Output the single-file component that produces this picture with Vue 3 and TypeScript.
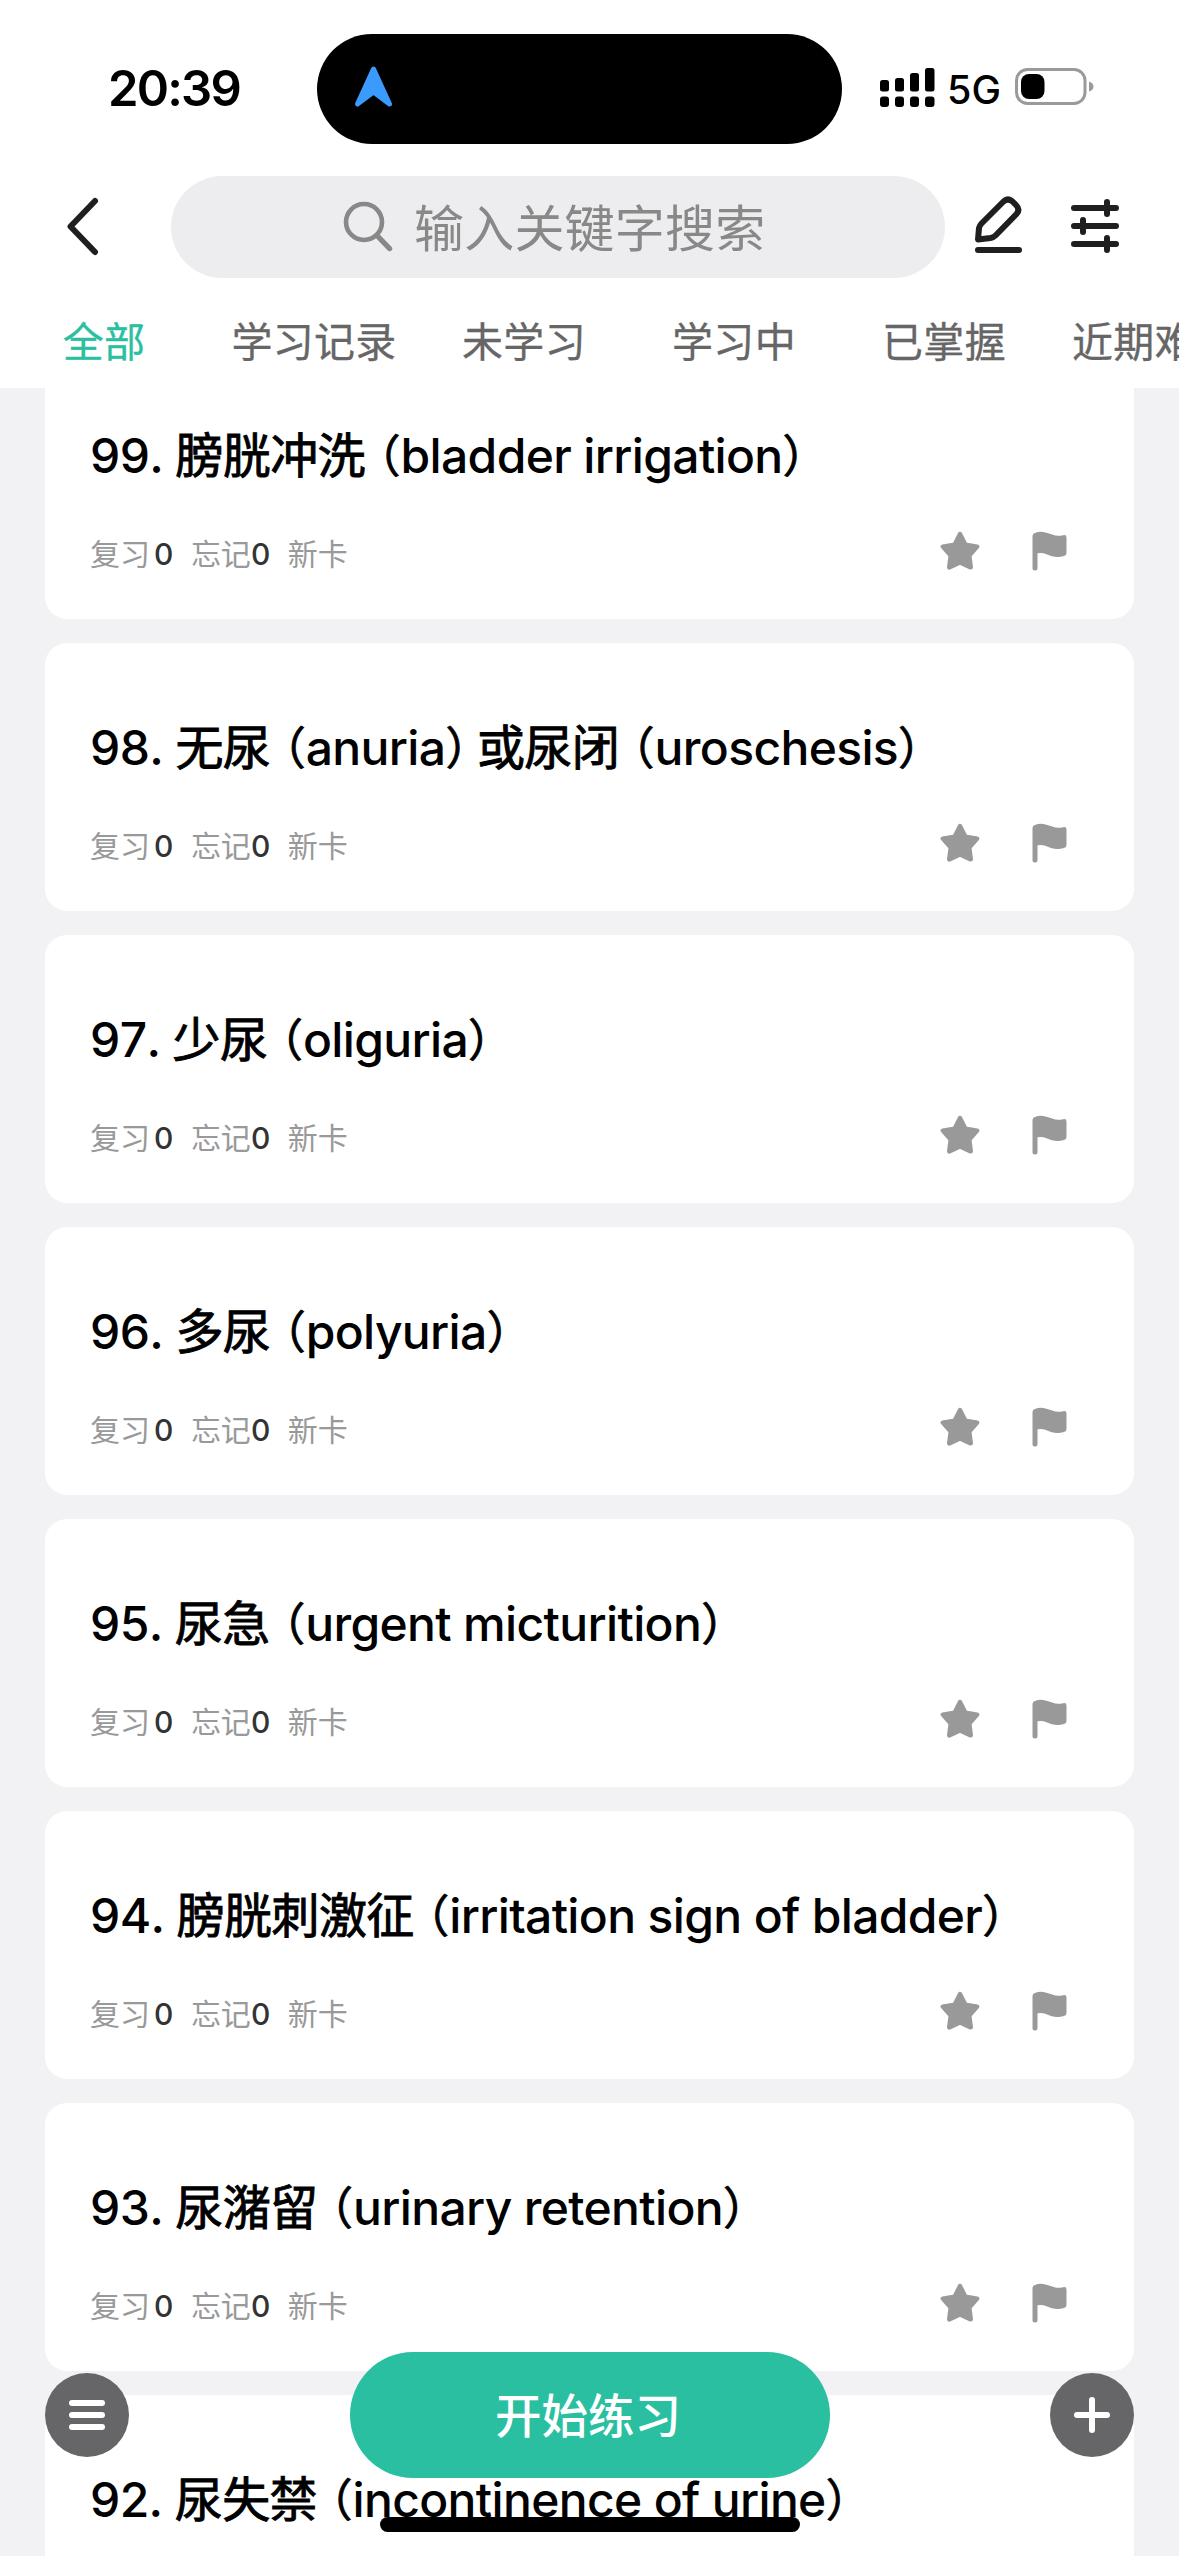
<script setup lang="ts">
interface Card {
  no: number
  parts: string[]
}

const tabs: string[] = ['全部', '学习记录', '未学习', '学习中', '已掌握']

const titles: [number, string][] = [
  [99, '膀胱冲洗（bladder irrigation）'],
  [98, '无尿（anuria）或尿闭（uroschesis）'],
  [97, '少尿（oliguria）'],
  [96, '多尿（polyuria）'],
  [95, '尿急（urgent micturition）'],
  [94, '膀胱刺激征（irritation sign of bladder）'],
  [93, '尿潴留（urinary retention）'],
  [92, '尿失禁（incontinence of urine）'],
]

const cards: Card[] = titles.map(([no, text]) => ({
  no,
  parts: text.split(/([（）])/).filter((p) => p !== ''),
}))

function partClass(part: string): string {
  if (part === '（') return 'open'
  if (part === '）') return 'close'
  return /[a-z]/.test(part) ? 'latin' : 'han'
}
</script>

<template>
  <div class="screen">
    <header class="header">
      <div class="status">
        <div class="time">20:39</div>
        <div class="island">
          <svg width="40" height="44" viewBox="0 0 40 44">
            <path d="M19.500 4 L35.500 39 L19.500 27 L3.500 39 Z" fill="#3a9bfc" stroke="#3a9bfc" stroke-width="5" stroke-linejoin="round" />
          </svg>
        </div>
        <div class="signals">
          <svg width="55" height="40" viewBox="0 0 55 40">
            <rect x="0" y="12" width="9" height="11.500" rx="2.500" />
            <rect x="15" y="10" width="9" height="13.500" rx="2.500" />
            <rect x="30" y="5" width="9" height="18.500" rx="2.500" />
            <rect x="45" y="0" width="9.500" height="23.500" rx="2.500" />
            <rect x="0" y="28.500" width="9" height="10.500" rx="3" />
            <rect x="15" y="28.500" width="9" height="10.500" rx="3" />
            <rect x="30" y="28.500" width="9" height="10.500" rx="3" />
            <rect x="45" y="28.500" width="9.500" height="10.500" rx="3" />
          </svg>
          <span class="net">5G</span>
          <svg width="79" height="38" viewBox="0 0 79 38">
            <rect x="1.500" y="1.500" width="68.500" height="34" rx="11" fill="none" stroke="#9a9a9a" stroke-width="3" />
            <rect x="6" y="6" width="23.500" height="25" rx="8" />
            <path d="M74 13.500 Q78.500 15 78.500 18.500 Q78.500 22 74 23.500 Z" fill="#9a9a9a" />
          </svg>
        </div>
      </div>

      <div class="nav">
        <svg class="back" width="36" height="60" viewBox="0 0 36 60">
          <path d="M32 5 L7.500 30.500 L32 56" fill="none" stroke="#1f1f1f" stroke-width="6" stroke-linecap="round" stroke-linejoin="round" />
        </svg>
        <div class="search">
          <svg width="52" height="60" viewBox="0 0 52 60">
            <circle cx="22" cy="23" r="18" fill="none" stroke="#888" stroke-width="4.600" />
            <path d="M35.500 37 L47.500 49.500" stroke="#888" stroke-width="5.400" stroke-linecap="round" />
          </svg>
          <span>输入关键字搜索</span>
        </div>
        <svg class="edit" width="50" height="60" viewBox="0 0 50 60">
          <path d="M4 43.500 L5 32 Q5.500 29.500 7.500 27.500 L29.500 5.500 Q34 1.500 38.500 5.500 L42 9 Q46.500 13.500 42.500 18 L21.500 39.500 Q19.500 41.500 16.500 42 Z" fill="none" stroke="#1f1f1f" stroke-width="6" stroke-linejoin="round" />
          <path d="M4 54 H45" stroke="#1f1f1f" stroke-width="6" stroke-linecap="round" />
        </svg>
        <svg class="filter" width="50" height="60" viewBox="0 0 50 60">
          <path d="M4 12 H46 M4 30 H46 M4 48 H46 M37 6 V18 M13 24 V36 M37 42 V54" fill="none" stroke="#1f1f1f" stroke-width="6" stroke-linecap="round" />
        </svg>
      </div>

      <nav class="tabs">
        <span v-for="(tab, i) in tabs" :key="tab" class="tab" :class="{ active: i === 0 }">{{ tab }}</span>
        <span class="tab last">近期难</span>
      </nav>
    </header>

    <main class="list">
      <article v-for="card in cards" :key="card.no" class="card">
        <h2 class="title"><span class="no">{{ card.no }}. </span><span v-for="(part, i) in card.parts" :key="i" :class="partClass(part)">{{ part }}</span></h2>
        <div v-if="card.no !== 92" class="meta">
          <span class="stat">复习<b class="n1">0</b></span>
          <span class="stat">忘记<b>0</b></span>
          <span class="stat">新卡</span>
          <span class="icons">
            <svg width="40" height="40" viewBox="0 0 40 40">
              <path d="M20 3 L25.300 13.600 L37.200 15.600 L29.300 24.600 L30.800 36.400 L20 31.400 L9.200 36.400 L10.700 24.600 L2.800 15.600 L14.700 13.600 Z" fill="#999" stroke="#999" stroke-width="4.400" stroke-linejoin="round" />
            </svg>
            <svg width="36" height="40" viewBox="0 0 36 40">
              <path d="M0.500 5 Q0.500 2.500 3 2 Q8 0 13.500 1.500 C20 3 23.500 6 31 4.300 Q34.500 3.300 34.500 6.500 V22 Q34.500 24.300 32 25 C24 27.500 18 24.500 14 23 Q10 21.600 5.500 22.300 V37 Q5.500 39.500 3 39.500 Q0.500 39.500 0.500 37 Z" fill="#999" />
            </svg>
          </span>
        </div>
      </article>
    </main>

    <footer class="actions">
      <button class="fab" aria-label="menu">
        <svg width="84" height="84" viewBox="0 0 84 84">
          <path d="M27 30 H57 M27 42 H57 M27 54 H57" stroke="#fff" stroke-width="6" stroke-linecap="round" />
        </svg>
      </button>
      <button class="start">开始练习</button>
      <button class="fab" aria-label="add">
        <svg width="84" height="84" viewBox="0 0 84 84">
          <path d="M27 42 H57 M42 27 V57" stroke="#fff" stroke-width="6" stroke-linecap="round" />
        </svg>
      </button>
    </footer>
    <div class="home"></div>
  </div>
</template>

<style>
body {
  margin: 0;
  background: #f2f2f4;
}
</style>

<style scoped>
.screen {
  position: relative;
  display: flex;
  flex-direction: column;
  width: 1179px;
  height: 2556px;
  overflow: hidden;
  background: #f2f2f4;
  font-family: Inter, "Noto Sans CJK SC", sans-serif;
  color: #000;
}

svg {
  display: block;
  flex: none;
}

.header {
  flex: none;
  height: 388px;
  background: #fff;
  overflow: hidden;
  z-index: 1;
}

.status {
  display: flex;
  height: 176px;
}

.time {
  width: 209px;
  padding-left: 108px;
  padding-top: 59px;
  font-size: 49px;
  line-height: 60px;
  font-weight: 600;
  letter-spacing: -1.8px;
}

.island {
  box-sizing: border-box;
  width: 525px;
  height: 110px;
  margin-top: 34px;
  padding: 31px 0 0 37px;
  border-radius: 55px;
  background: #000;
}

.signals {
  display: flex;
  align-items: flex-start;
  padding: 68px 0 0 38px;
}

.net {
  width: 67px;
  margin-left: 12px;
  padding-top: 2px;
  font-size: 39.500px;
  line-height: 40px;
  font-weight: 500;
}

.signals svg:last-child {
  margin-left: 1px;
}

.nav {
  display: flex;
  align-items: center;
  height: 102px;
  padding-left: 63px;
}

.search {
  display: flex;
  align-items: center;
  box-sizing: border-box;
  width: 774px;
  height: 102px;
  margin-left: 72px;
  padding-left: 171px;
  border-radius: 51px;
  background: #ededef;
  color: #888;
  font-size: 50px;
  line-height: 60px;
  letter-spacing: 0.2px;
}

.search svg {
  margin-top: 3px;
}

.search span {
  margin: 4px 0 0 20px;
}

.back,
.edit,
.filter {
  margin-top: -2px;
}

.edit {
  margin-left: 29px;
}

.filter {
  margin-left: 46px;
}

.tabs {
  display: flex;
  margin-left: -1px;
  padding-top: 34px;
}

.tab {
  flex: none;
  width: 210px;
  text-align: center;
  font-size: 41px;
  line-height: 60px;
  letter-spacing: 0.3px;
  color: #666;
  white-space: nowrap;
  -webkit-text-stroke: 0.3px currentColor;
}

.tab.active {
  color: #29bfa0;
}

.tab.last {
  box-sizing: border-box;
  padding-left: 23px;
  text-align: left;
}

.list {
  display: flex;
  flex-direction: column;
  gap: 24px;
  margin: -37px 45px 0;
}

.card {
  flex: none;
  box-sizing: border-box;
  height: 268px;
  padding: 75px 66px 0 45px;
  border-radius: 22px;
  background: #fff;
}

.title {
  height: 60px;
  margin: 0;
  font-size: 48px;
  line-height: 60px;
  font-weight: 500;
  white-space: pre;
}

.no {
  font-kerning: none;
  letter-spacing: -0.6px;
}

.han {
  font-weight: 400;
  letter-spacing: -0.6px;
  -webkit-text-stroke: 0.9px currentColor;
}

.latin {
  letter-spacing: -0.65px;
}

.open,
.close {
  font-size: 45px;
  font-weight: 400;
  font-feature-settings: "halt";
  -webkit-text-stroke: 0.8px currentColor;
}

.open {
  margin-left: 13px;
}

.close {
  margin-right: 9px;
}

.meta {
  display: flex;
  margin-top: 48px;
  font-size: 30px;
  line-height: 40px;
  color: #999;
}

.stat {
  margin-right: 17.500px;
}

.stat b {
  font-weight: 500;
  color: #333;
}

.stat .n1 {
  margin-left: 4px;
}

.icons {
  display: flex;
  margin-left: auto;
  gap: 52px;
  margin-top: -3px;
}

.actions {
  position: absolute;
  left: 45px;
  right: 45px;
  top: 2352px;
  display: flex;
  align-items: center;
  justify-content: space-between;
  z-index: 2;
}

.fab {
  width: 84px;
  height: 84px;
  padding: 0;
  border: 0;
  border-radius: 50%;
  background: #666668;
}

.start {
  width: 480px;
  height: 126px;
  padding: 2px 3px 0 0;
  border: 0;
  border-radius: 63px;
  background: #29bfa0;
  color: #fff;
  font-family: inherit;
  font-size: 46.500px;
  line-height: 60px;
  font-weight: 500;
}

.home {
  position: absolute;
  left: 380px;
  top: 2517px;
  width: 420px;
  height: 15px;
  border-radius: 8px;
  background: #000;
  z-index: 3;
}
</style>
